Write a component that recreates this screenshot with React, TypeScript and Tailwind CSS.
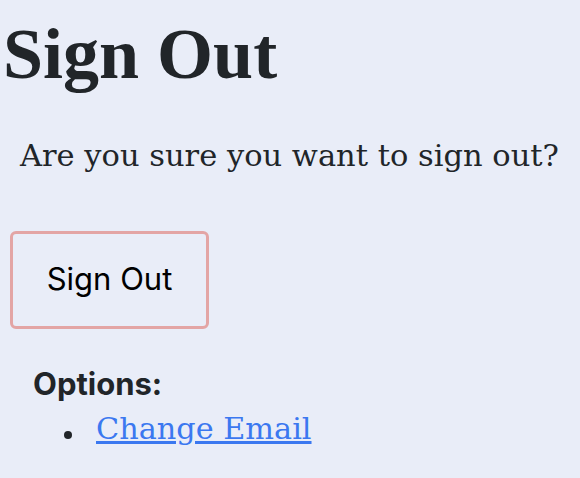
export default function App() {
  return (
    <div className="min-h-[478px] w-[580px] bg-[#e9edf8] text-[#212529] overflow-hidden">
      <h1 className="pl-[3px] pt-[18px] text-[72px] leading-none font-bold font-['Liberation_Serif',serif]">
        Sign Out
      </h1>
      <p className="mt-[51px] pl-[20px] text-[30.5px] leading-none font-['DejaVu_Serif',serif]">
        Are you sure you want to sign out?
      </p>
      <button className="mt-[59px] ml-[10px] block w-[199px] h-[98px] border-[3px] border-[#e3a5a5] rounded-[6px] text-[31px] text-black font-['Inter',sans-serif]">
        Sign Out
      </button>
      <div className="mt-[39px] pl-[33px] font-['Inter',sans-serif]">
        <div className="text-[31px] font-bold leading-none">Options:</div>
        <ul className="mt-[15px] text-[30.3px] leading-none font-['DejaVu_Serif',serif]">
          <li className="flex items-baseline">
            <span className="ml-[31px] mr-[24px] w-[8px] h-[8px] rounded-full bg-[#212529]" />
            <a href="#" className="text-[#3b78f0] underline">
              Change Email
            </a>
          </li>
        </ul>
      </div>
    </div>
  );
}
